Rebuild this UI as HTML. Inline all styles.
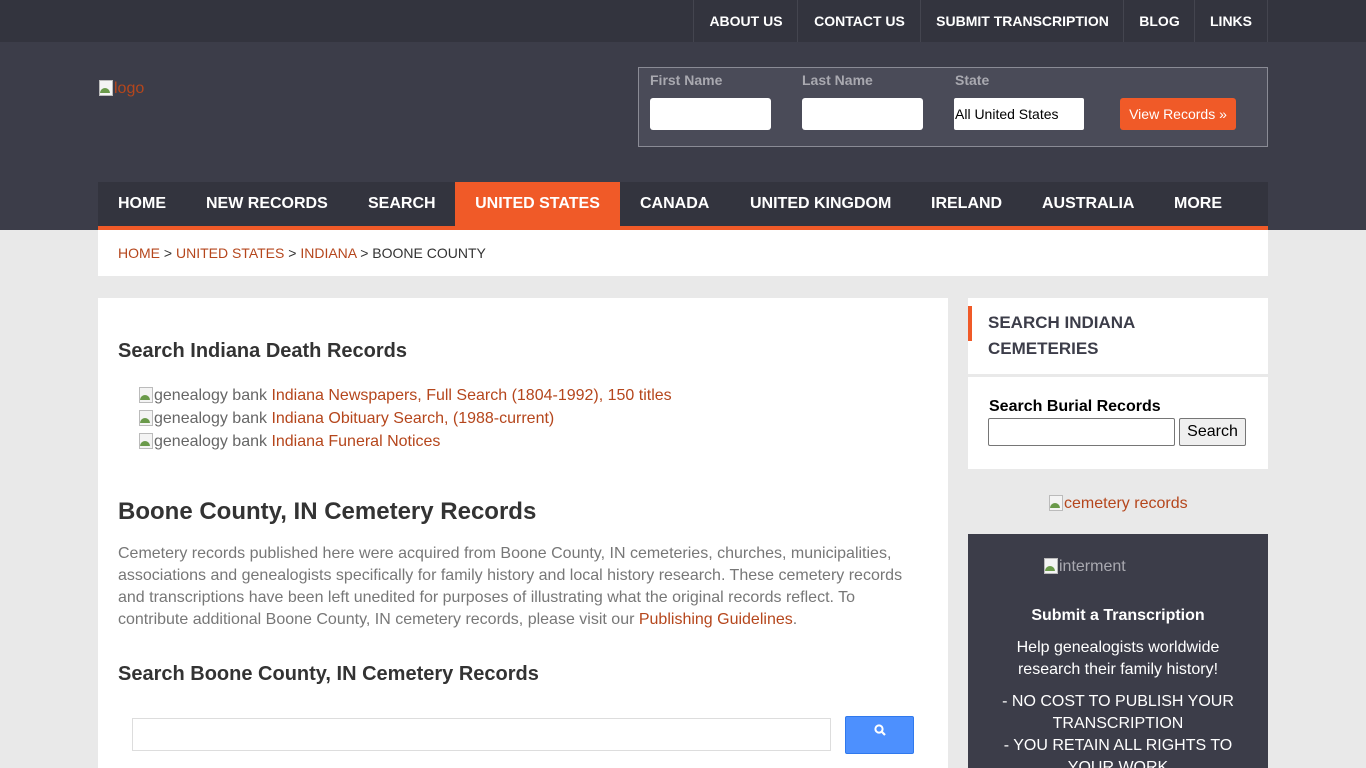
<!DOCTYPE html>
<html><head><meta charset="utf-8"><style>
*{margin:0;padding:0;box-sizing:border-box}
html,body{width:1366px;height:768px;overflow:hidden}
body{background:#e9e9e9;font-family:"Liberation Sans",Arial,sans-serif;position:relative}
.a{position:absolute}
a{color:#b5461c;text-decoration:none}
.ic{display:inline-block;width:16px;height:16px;vertical-align:-2px;position:relative}
.ic:before{content:"";position:absolute;left:1px;top:1px;width:12px;height:14px;border:1px solid #bbb;background:#f4f4f4}
.ic:after{content:"";position:absolute;left:2px;top:9px;width:10px;height:5px;background:#6a9a4a;border-radius:5px 5px 0 0}
#top{left:0;top:0;width:1366px;height:42px;background:#33343e}
#top .l{top:0;height:42px;line-height:42px;color:#fff;font-weight:bold;font-size:14px;border-left:1px solid #44454f;text-align:center}
#hdr{left:0;top:42px;width:1366px;height:188px;background:#3c3d49}
#form{left:638px;top:67px;width:630px;height:80px;border:1px solid #8a8b95;background:#4a4b58}
.lab{color:#a9a9b0;font-size:14px;font-weight:bold;top:72px}
.inp{top:98px;height:32px;background:#fff;border-radius:3px}
#nav{left:98px;top:182px;width:1170px;height:48px;background:#33343e;border-bottom:4px solid #f05a28}
#nav .n{top:0;height:44px;line-height:44px;color:#fff;font-weight:bold;font-size:16px}
#crumb{left:98px;top:230px;width:1170px;height:46px;background:#fff;font-size:14px;line-height:46px;padding-left:20px;color:#333}
#main{left:98px;top:298px;width:850px;height:470px;background:#fff}
h2{font-size:20px;color:#333;font-weight:bold}
.gb{color:#666;font-size:16px}
p.t{color:#777;font-size:16px;line-height:22px}
#side1{left:968px;top:298px;width:300px;height:76px;background:#fff}
#side2{left:968px;top:377px;width:300px;height:92px;background:#fff}
#dark{left:968px;top:534px;width:300px;height:234px;background:#3c3d49;color:#fff;text-align:center;font-size:16px;line-height:22px;overflow:hidden}
</style></head><body>
<div id="top" class="a">
<div class="a l" style="left:693px;width:105px">ABOUT US</div>
<div class="a l" style="left:797px;width:124px">CONTACT US</div>
<div class="a l" style="left:920px;width:204px">SUBMIT TRANSCRIPTION</div>
<div class="a l" style="left:1123px;width:72px">BLOG</div>
<div class="a l" style="left:1194px;width:74px;border-right:1px solid #44454f">LINKS</div>
</div>
<div id="hdr" class="a"></div>
<div class="a" style="left:98px;top:79px;color:#b5461c;font-size:16px"><span class="ic"></span>logo</div>
<div id="form" class="a"></div>
<div class="a lab" style="left:650px">First Name</div>
<div class="a lab" style="left:802px">Last Name</div>
<div class="a lab" style="left:955px">State</div>
<div class="a inp" style="left:650px;width:121px"></div>
<div class="a inp" style="left:802px;width:121px"></div>
<div class="a inp" style="left:954px;width:130px;border-radius:2px;font-size:14px;line-height:32px;color:#000;padding-left:1px">All United States</div>
<div class="a" style="left:1120px;top:98px;width:116px;height:32px;background:#f05a28;border-radius:3px;color:#fff;font-size:14px;line-height:32px;text-align:center">View Records »</div>
<div id="nav" class="a">
<div class="a n" style="left:20px">HOME</div>
<div class="a n" style="left:108px">NEW RECORDS</div>
<div class="a n" style="left:270px">SEARCH</div>
<div class="a n" style="left:357px;width:165px;background:#f05a28;text-align:center">UNITED STATES</div>
<div class="a n" style="left:542px">CANADA</div>
<div class="a n" style="left:652px">UNITED KINGDOM</div>
<div class="a n" style="left:833px">IRELAND</div>
<div class="a n" style="left:944px">AUSTRALIA</div>
<div class="a n" style="left:1076px">MORE</div>
</div>
<div id="crumb" class="a"><a>HOME</a> &gt; <a>UNITED STATES</a> &gt; <a>INDIANA</a> &gt; BOONE COUNTY</div>
<div id="main" class="a">
<h2 class="a" style="left:20px;top:42px">Search Indiana Death Records</h2>
<div class="a gb" style="left:40px;top:86px;line-height:23px"><span class="ic"></span>genealogy bank <a>Indiana Newspapers, Full Search (1804-1992), 150 titles</a><br><span class="ic"></span>genealogy bank <a>Indiana Obituary Search, (1988-current)</a><br><span class="ic"></span>genealogy bank <a>Indiana Funeral Notices</a></div>
<h2 class="a" style="left:20px;top:200px;font-size:24px">Boone County, IN Cemetery Records</h2>
<p class="a t" style="left:20px;top:245px;width:800px">Cemetery records published here were acquired from Boone County, IN cemeteries, churches, municipalities, associations and genealogists specifically for family history and local history research. These cemetery records and transcriptions have been left unedited for purposes of illustrating what the original records reflect. To contribute additional Boone County, IN cemetery records, please visit our <a>Publishing Guidelines</a>.</p>
<h2 class="a" style="left:20px;top:365px">Search Boone County, IN Cemetery Records</h2>
<div class="a" style="left:34px;top:420px;width:699px;height:33px;border:1px solid #ddd"></div>
<div class="a" style="left:747px;top:418px;width:69px;height:38px;background:#4d90fe;border-radius:2px;border:1px solid #3079ed"><svg class="a" style="left:28px;top:7px" width="13" height="13" viewBox="0 0 13 13"><circle cx="5" cy="5" r="3.6" fill="none" stroke="#fff" stroke-width="2"/><path d="M7.5 7.5L11 11" stroke="#fff" stroke-width="2.2"/></svg></div>
</div>
<div id="side1" class="a"><div class="a" style="left:0;top:8px;width:4px;height:35px;background:#f05a28"></div>
<div class="a" style="left:20px;top:12px;font-size:17px;font-weight:bold;color:#3c3d49;line-height:26px">SEARCH INDIANA<br>CEMETERIES</div></div>
<div id="side2" class="a">
<div class="a" style="left:21px;top:21px;font-size:16px;font-weight:bold;color:#000">Search Burial Records</div>
<div class="a" style="left:20px;top:41px;width:187px;height:28px;border:1px solid #767676;border-radius:2px"></div>
<div class="a" style="left:211px;top:41px;width:67px;height:28px;border:1px solid #767676;border-radius:2px;background:#efefef;font-size:16px;line-height:26px;text-align:center">Search</div>
</div>
<div class="a" style="left:1048px;top:494px;font-size:16px;color:#b5461c"><span class="ic"></span>cemetery records</div>
<div id="dark" class="a">
<div class="a" style="left:75px;top:22px;color:#a9a9b0"><span class="ic"></span>interment</div>
<div class="a" style="left:0;top:71px;width:300px;font-weight:bold">Submit a Transcription</div>
<div class="a" style="left:0;top:103px;width:300px">Help genealogists worldwide<br>research their family history!</div>
<div class="a" style="left:20px;top:157px;width:260px">- NO COST TO PUBLISH YOUR TRANSCRIPTION<br>- YOU RETAIN ALL RIGHTS TO YOUR WORK</div>
</div>
</body></html>
